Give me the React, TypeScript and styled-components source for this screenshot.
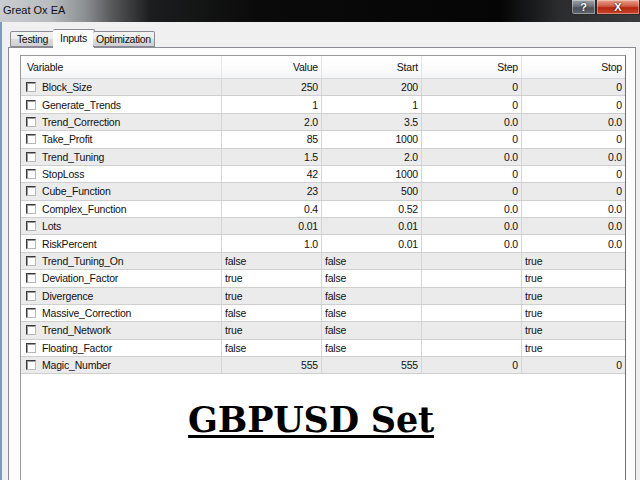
import styled, { createGlobalStyle } from "styled-components";

const GlobalStyle = createGlobalStyle`
    html, body {
        margin: 0;
        padding: 0;
        background: #f0f0f0;
        overflow: hidden;
    }
    * {
        box-sizing: border-box;
    }
`;

type Param = {
    name: string;
    value: string;
    start: string;
    step: string;
    stop: string;
    flag?: boolean;
};

const params: Param[] = [
    { name: "Block_Size", value: "250", start: "200", step: "0", stop: "0" },
    { name: "Generate_Trends", value: "1", start: "1", step: "0", stop: "0" },
    { name: "Trend_Correction", value: "2.0", start: "3.5", step: "0.0", stop: "0.0" },
    { name: "Take_Profit", value: "85", start: "1000", step: "0", stop: "0" },
    { name: "Trend_Tuning", value: "1.5", start: "2.0", step: "0.0", stop: "0.0" },
    { name: "StopLoss", value: "42", start: "1000", step: "0", stop: "0" },
    { name: "Cube_Function", value: "23", start: "500", step: "0", stop: "0" },
    { name: "Complex_Function", value: "0.4", start: "0.52", step: "0.0", stop: "0.0" },
    { name: "Lots", value: "0.01", start: "0.01", step: "0.0", stop: "0.0" },
    { name: "RiskPercent", value: "1.0", start: "0.01", step: "0.0", stop: "0.0" },
    { name: "Trend_Tuning_On", value: "false", start: "false", step: "", stop: "true", flag: true },
    { name: "Deviation_Factor", value: "true", start: "false", step: "", stop: "true", flag: true },
    { name: "Divergence", value: "true", start: "false", step: "", stop: "true", flag: true },
    { name: "Massive_Correction", value: "false", start: "false", step: "", stop: "true", flag: true },
    { name: "Trend_Network", value: "true", start: "false", step: "", stop: "true", flag: true },
    { name: "Floating_Factor", value: "false", start: "false", step: "", stop: "true", flag: true },
    { name: "Magic_Number", value: "555", start: "555", step: "0", stop: "0" },
];

const Window = styled.div`
    width: 640px;
    height: 480px;
    display: flex;
    flex-direction: column;
    font-family: "Liberation Sans", Arial, sans-serif;
    overflow: hidden;
`;

const TitleBar = styled.div`
    height: 22px;
    flex: none;
    display: flex;
    align-items: flex-start;
    background: linear-gradient(90deg, #c9ccd0 0px, #b9bcbf 50px, #8d9092 85px, #5a5c5e 110px, #1c1d1e 150px, #0a0a0a 260px, #050505 500px, #2a2c2e 560px, #3a3c3e 640px);
`;

const Caption = styled.span`
    font-size: 11px;
    color: #101010;
    padding: 4px 0 0 3px;
    line-height: 12px;
`;

const CtrlButton = styled.div<{ $close?: boolean }>`
    height: 15px;
    width: ${(p) => (p.$close ? "44px" : "25px")};
    display: flex;
    align-items: center;
    justify-content: center;
    color: #fff;
    font-size: 11px;
    font-weight: bold;
    text-shadow: 0 0 2px #000;
    border: 1px solid #2a2a2a;
    border-top: none;
    border-radius: ${(p) => (p.$close ? "0" : "0 0 0 3px")};
    background: ${(p) =>
        p.$close
            ? "linear-gradient(180deg, #e8a08f 0%, #cf5a43 45%, #b4260e 55%, #c9462c 100%)"
            : "linear-gradient(180deg, #9ea4ab 0%, #6c7279 45%, #4d5258 55%, #5f656c 100%)"};
    box-shadow: inset 0 0 0 1px rgba(255, 255, 255, 0.35);
`;

const Controls = styled.div`
    margin-left: auto;
    display: flex;
`;

const Body = styled.div`
    flex: 1;
    display: flex;
    flex-direction: column;
    background: #f0f0f0;
    border-left: 2px solid #7b9cc0;
    padding: 0 4px 0 6px;
`;

const TabStrip = styled.div`
    height: 25px;
    flex: none;
    display: flex;
    align-items: flex-end;
    padding-left: 2px;
    position: relative;
    z-index: 1;
`;

const Tab = styled.div<{ $active?: boolean; $w: number }>`
    width: ${(p) => p.$w}px;
    height: ${(p) => (p.$active ? "19px" : "16px")};
    margin: ${(p) => (p.$active ? "0 -2px -1px" : "0")};
    padding-top: ${(p) => (p.$active ? "2px" : "1px")};
    text-align: center;
    font-size: 10.5px;
    letter-spacing: -0.3px;
    color: #111;
    border: 1px solid #898c95;
    border-bottom: ${(p) => (p.$active ? "none" : "1px solid #898c95")};
    border-radius: 2px 2px 0 0;
    background: ${(p) => (p.$active ? "#fcfcfc" : "linear-gradient(180deg, #f3f3f3 0%, #ebebeb 50%, #dddddd 51%, #cfcfcf 100%)")};
    & + & {
        border-left: ${(p) => (p.$active ? "1px solid #898c95" : "none")};
    }
`;

const Panel = styled.div`
    flex: 1;
    border: 1px solid #898c95;
    border-bottom: none;
    background: #fcfcfc;
    padding: 7px 9px 0 11px;
    display: flex;
    min-height: 0;
`;

const Table = styled.div`
    flex: 1;
    display: flex;
    flex-direction: column;
    background: #fff;
    border: 1px solid #9a9a9a;
    border-right-color: #6f6f6f;
    border-bottom: none;
    font-size: 10.5px;
    letter-spacing: -0.2px;
    color: #111;
`;

const Row = styled.div<{ $shade?: boolean; $head?: boolean }>`
    display: grid;
    grid-template-columns: 201px 100px 100px 100px 1fr;
    height: ${(p) => (p.$head ? "23px" : "17.375px")};
    flex: none;
    background: ${(p) =>
        p.$head ? "linear-gradient(180deg, #ffffff 0%, #fbfbfc 60%, #f3f4f6 100%)" : p.$shade ? "#ebebeb" : "#ffffff"};
    border-bottom: 1px solid ${(p) => (p.$head ? "#d5d5d5" : "#cfcfcf")};
`;

const Cell = styled.div<{ $align?: "left" | "right"; $head?: boolean }>`
    display: flex;
    align-items: center;
    justify-content: ${(p) => (p.$align === "right" ? "flex-end" : "flex-start")};
    padding: ${(p) => (p.$align === "right" ? "0 3px 0 0" : "0 0 0 3px")};
    border-right: 1px solid ${(p) => (p.$head ? "#e4e5e7" : "#d6d6d6")};
    white-space: nowrap;
    overflow: hidden;
    &:last-child {
        border-right: none;
    }
`;

const NameCell = styled(Cell)`
    padding-left: 5px;
    gap: 6px;
`;

const HeadName = styled(Cell)`
    padding-left: 6px;
`;

const Check = styled.span`
    width: 10px;
    height: 10px;
    flex: none;
    background: #fff;
    border-top: 1px solid #3a3a3a;
    border-left: 1px solid #3a3a3a;
    border-right: 1px solid #b8b8b8;
    border-bottom: 1px solid #b8b8b8;
    box-shadow: inset 1px 1px 0 #9a9a9a;
`;

const SetTitle = styled.div`
    margin-top: 26px;
    padding-right: 24px;
    text-align: center;
    font-family: "DejaVu Serif", "Liberation Serif", serif;
    font-weight: bold;
    font-size: 35px;
    line-height: 40px;
    letter-spacing: -0.2px;
    color: #000;
    text-decoration: underline;
    text-decoration-thickness: 3px;
    text-underline-offset: 3px;
`;

const ParamRow = ({ p, index }: { p: Param; index: number }) => {
    const numAlign = p.flag ? "left" : "right";
    return (
        <Row $shade={index % 2 === 0}>
            <NameCell>
                <Check />
                {p.name}
            </NameCell>
            <Cell $align={numAlign}>{p.value}</Cell>
            <Cell $align={numAlign}>{p.start}</Cell>
            <Cell $align={numAlign}>{p.step}</Cell>
            <Cell $align={numAlign}>{p.stop}</Cell>
        </Row>
    );
};

const App = () => {
    return (
        <Window>
            <GlobalStyle />
            <TitleBar>
                <Caption>Great Ox EA</Caption>
                <Controls>
                    <CtrlButton>?</CtrlButton>
                    <CtrlButton $close>X</CtrlButton>
                </Controls>
            </TitleBar>
            <Body>
                <TabStrip>
                    <Tab $w={45}>Testing</Tab>
                    <Tab $w={42} $active>Inputs</Tab>
                    <Tab $w={62}>Optimization</Tab>
                </TabStrip>
                <Panel>
                    <Table>
                        <Row $head>
                            <HeadName $head>Variable</HeadName>
                            <Cell $head $align="right">Value</Cell>
                            <Cell $head $align="right">Start</Cell>
                            <Cell $head $align="right">Step</Cell>
                            <Cell $head $align="right">Stop</Cell>
                        </Row>
                        {params.map((p, i) => (
                            <ParamRow key={p.name} p={p} index={i} />
                        ))}
                        <SetTitle>GBPUSD Set</SetTitle>
                    </Table>
                </Panel>
            </Body>
        </Window>
    );
};

export default App;
